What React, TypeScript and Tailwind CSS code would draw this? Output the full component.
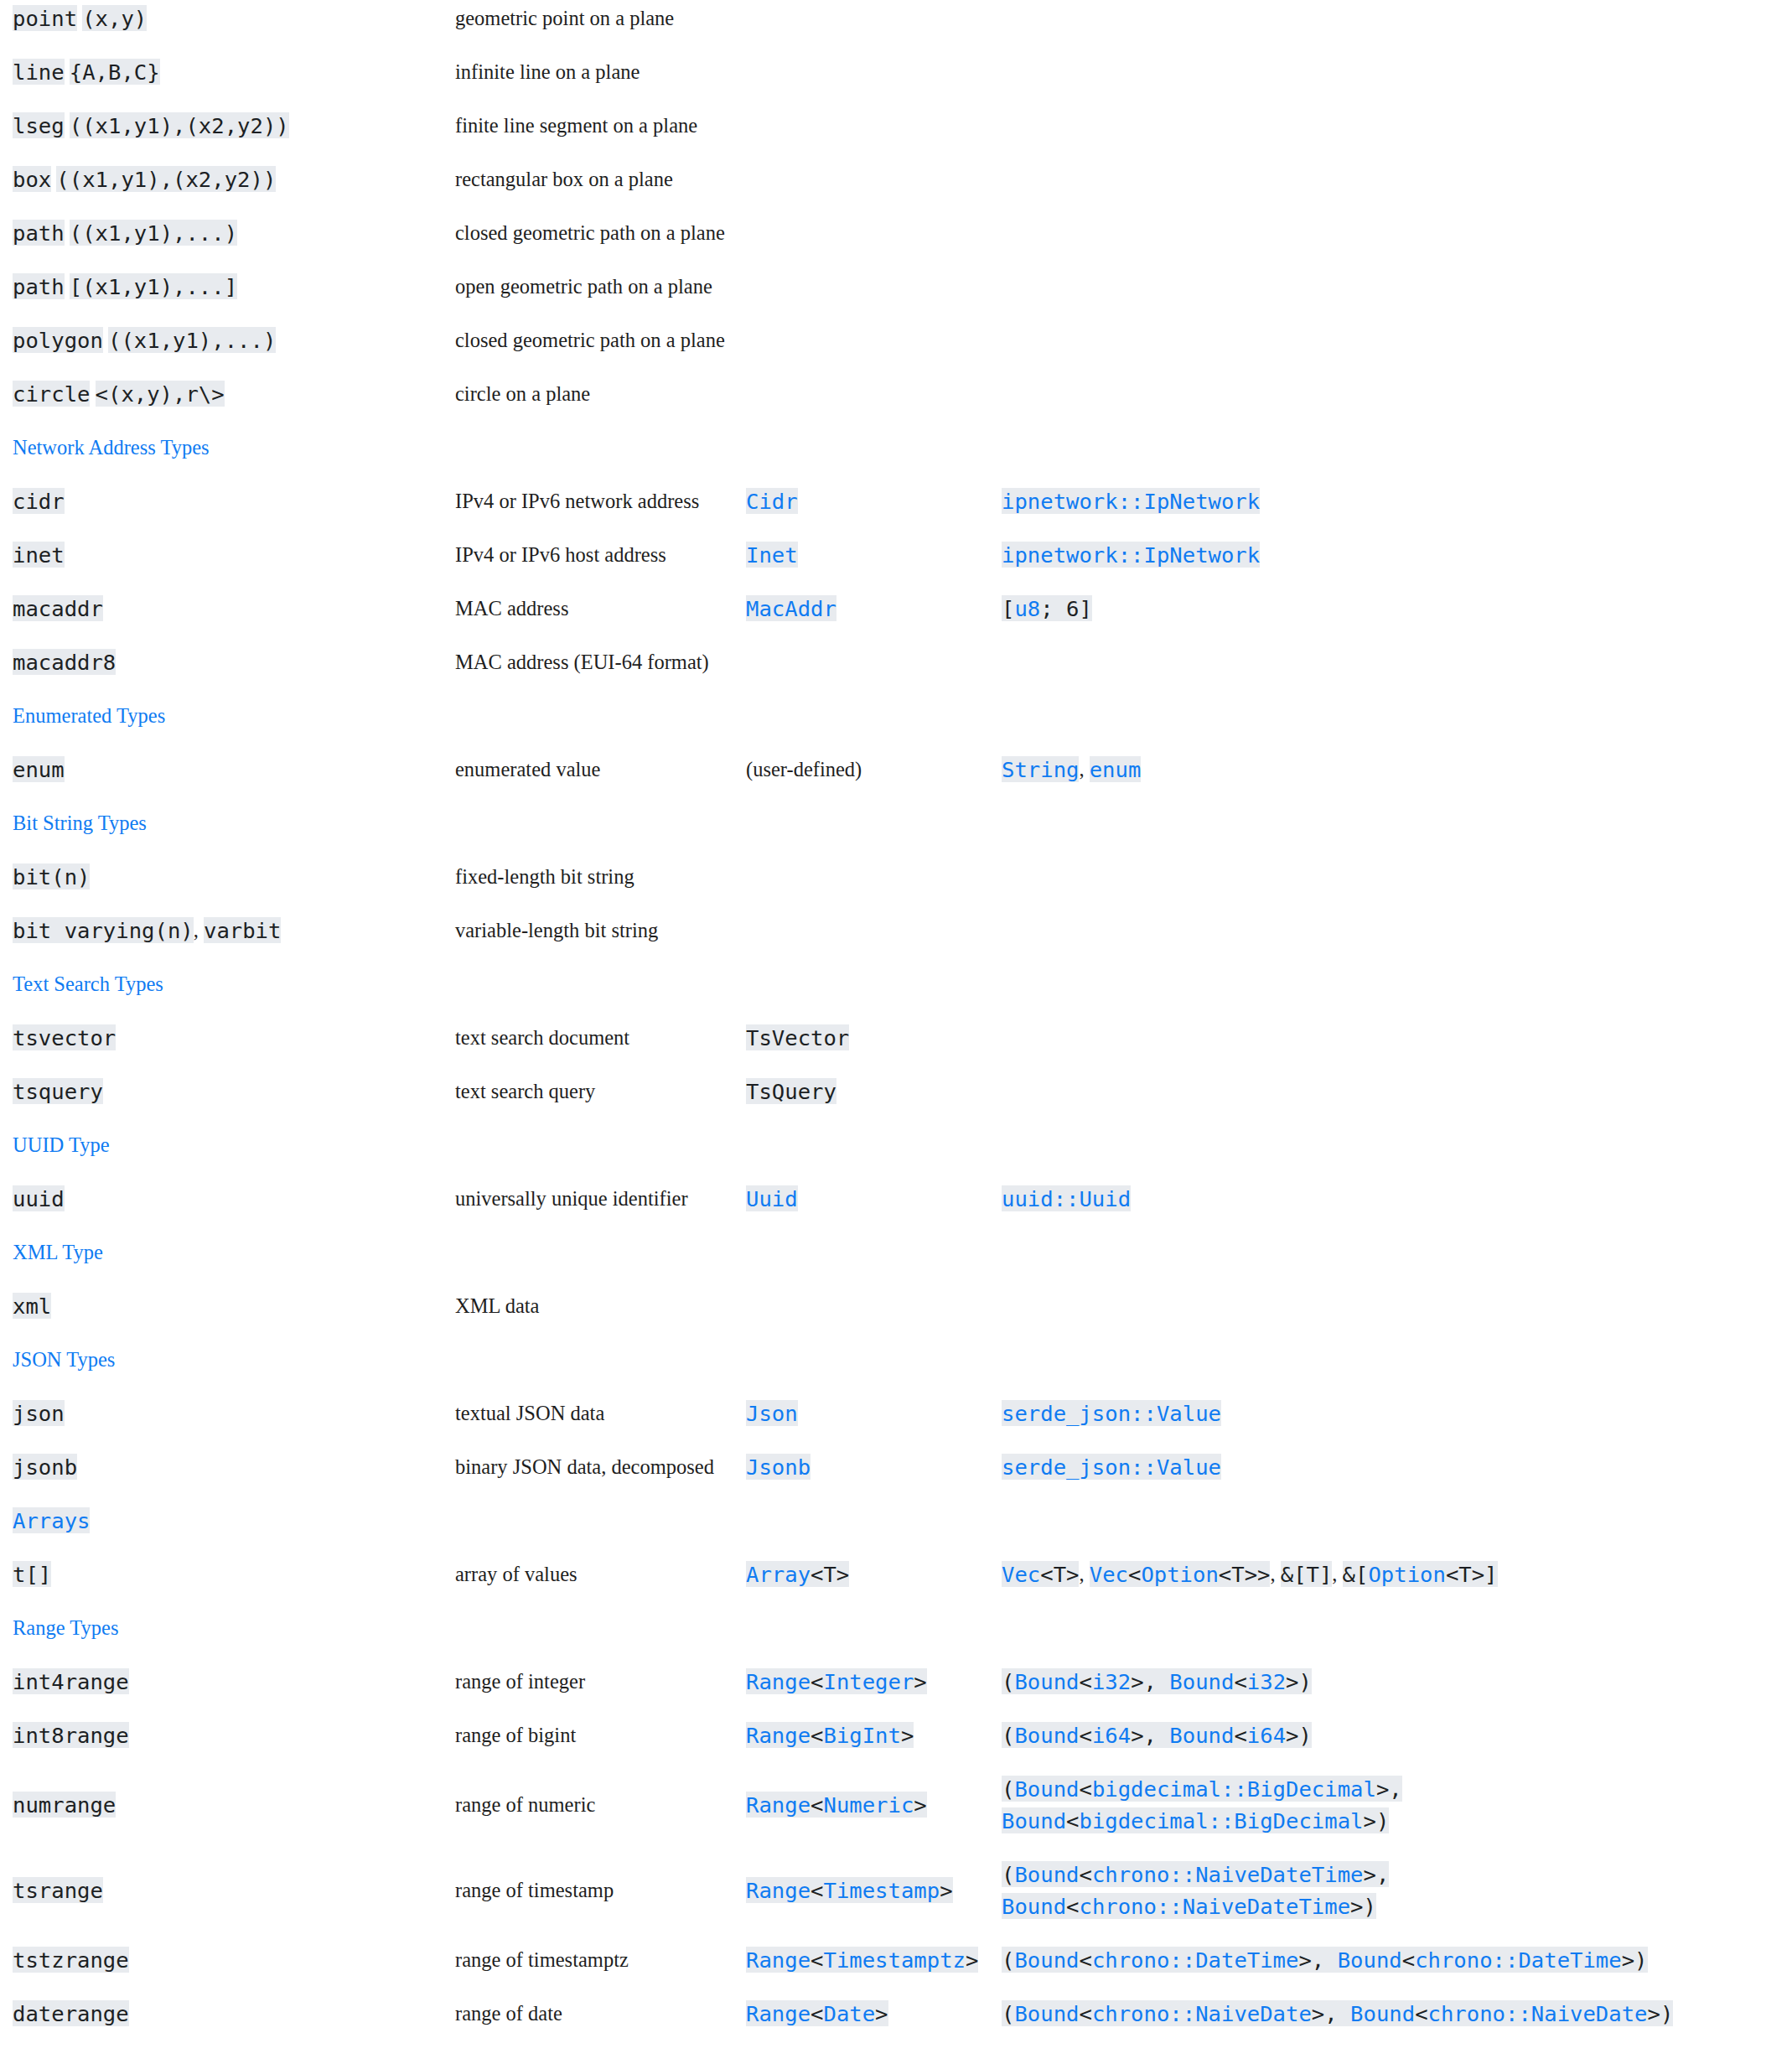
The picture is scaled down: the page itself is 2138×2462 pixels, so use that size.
import React from "react";

type Item = string | { code: string };
type Cell = Item[];
type Row = { head: Item } | { cells: Cell[] };

const c = (s: string) => ({ code: s });

// "~" toggles blue (linked) parts inside a code span
const Code = ({ src }: { src: string }) => {
  const parts = src.split("~");
  return (
    <code className="bg-[#e8ebef] py-[0.5px] font-['DejaVu_Sans_Mono',monospace] text-[25.6px] leading-none text-[#1c1f23]">
      {parts.map((p, i) =>
        i % 2 === 1 ? (
          <span key={i} className="text-[#0f7bf2]">
            {p}
          </span>
        ) : (
          <React.Fragment key={i}>{p}</React.Fragment>
        )
      )}
    </code>
  );
};

const renderItem = (it: Item, i: number) =>
  typeof it === "string" ? <React.Fragment key={i}>{it}</React.Fragment> : <Code key={i} src={it.code} />;

const rows: Row[] = [
  { cells: [[c("point"), " ", c("(x,y)")], ["geometric point on a plane"]] },
  { cells: [[c("line"), " ", c("{A,B,C}")], ["infinite line on a plane"]] },
  { cells: [[c("lseg"), " ", c("((x1,y1),(x2,y2))")], ["finite line segment on a plane"]] },
  { cells: [[c("box"), " ", c("((x1,y1),(x2,y2))")], ["rectangular box on a plane"]] },
  { cells: [[c("path"), " ", c("((x1,y1),...)")], ["closed geometric path on a plane"]] },
  { cells: [[c("path"), " ", c("[(x1,y1),...]")], ["open geometric path on a plane"]] },
  { cells: [[c("polygon"), " ", c("((x1,y1),...)")], ["closed geometric path on a plane"]] },
  { cells: [[c("circle"), " ", c("<(x,y),r\\>")], ["circle on a plane"]] },
  { head: "Network Address Types" },
  { cells: [[c("cidr")], ["IPv4 or IPv6 network address"], [c("~Cidr~")], [c("~ipnetwork::IpNetwork~")]] },
  { cells: [[c("inet")], ["IPv4 or IPv6 host address"], [c("~Inet~")], [c("~ipnetwork::IpNetwork~")]] },
  { cells: [[c("macaddr")], ["MAC address"], [c("~MacAddr~")], [c("[~u8~; 6]")]] },
  { cells: [[c("macaddr8")], ["MAC address (EUI-64 format)"]] },
  { head: "Enumerated Types" },
  { cells: [[c("enum")], ["enumerated value"], ["(user-defined)"], [c("~String~"), ", ", c("~enum~")]] },
  { head: "Bit String Types" },
  { cells: [[c("bit(n)")], ["fixed-length bit string"]] },
  { cells: [[c("bit varying(n)"), ", ", c("varbit")], ["variable-length bit string"]] },
  { head: "Text Search Types" },
  { cells: [[c("tsvector")], ["text search document"], [c("TsVector")]] },
  { cells: [[c("tsquery")], ["text search query"], [c("TsQuery")]] },
  { head: "UUID Type" },
  { cells: [[c("uuid")], ["universally unique identifier"], [c("~Uuid~")], [c("~uuid::Uuid~")]] },
  { head: "XML Type" },
  { cells: [[c("xml")], ["XML data"]] },
  { head: "JSON Types" },
  { cells: [[c("json")], ["textual JSON data"], [c("~Json~")], [c("~serde_json::Value~")]] },
  { cells: [[c("jsonb")], ["binary JSON data, decomposed"], [c("~Jsonb~")], [c("~serde_json::Value~")]] },
  { head: c("~Arrays~") },
  {
    cells: [
      [c("t[]")],
      ["array of values"],
      [c("~Array~<T>")],
      [c("~Vec~<T>"), ", ", c("~Vec~<~Option~<T>>"), ", ", c("&[T]"), ", ", c("&[~Option~<T>]")],
    ],
  },
  { head: "Range Types" },
  { cells: [[c("int4range")], ["range of integer"], [c("~Range~<~Integer~>")], [c("(~Bound~<~i32~>, ~Bound~<~i32~>)")]] },
  { cells: [[c("int8range")], ["range of bigint"], [c("~Range~<~BigInt~>")], [c("(~Bound~<~i64~>, ~Bound~<~i64~>)")]] },
  {
    cells: [
      [c("numrange")],
      ["range of numeric"],
      [c("~Range~<~Numeric~>")],
      [c("(~Bound~<~bigdecimal::BigDecimal~>, ~Bound~<~bigdecimal::BigDecimal~>)")],
    ],
  },
  {
    cells: [
      [c("tsrange")],
      ["range of timestamp"],
      [c("~Range~<~Timestamp~>")],
      [c("(~Bound~<~chrono::NaiveDateTime~>, ~Bound~<~chrono::NaiveDateTime~>)")],
    ],
  },
  {
    cells: [
      [c("tstzrange")],
      ["range of timestamptz"],
      [c("~Range~<~Timestamptz~>")],
      [c("(~Bound~<~chrono::DateTime~>, ~Bound~<~chrono::DateTime~>)")],
    ],
  },
  {
    cells: [
      [c("daterange")],
      ["range of date"],
      [c("~Range~<~Date~>")],
      [c("(~Bound~<~chrono::NaiveDate~>, ~Bound~<~chrono::NaiveDate~>)")],
    ],
  },
];

export default function App() {
  return (
    <div className="min-h-screen overflow-hidden bg-white font-['Liberation_Serif',serif] text-[24.5px] leading-[38px] text-[#1e1e1e]">
      <div className="-mt-[10px] pl-[15px]">
        {rows.map((row, i) =>
          "head" in row ? (
            <div key={i} className="py-[13px] text-[#0f7bf2]">
              {renderItem(row.head, 0)}
            </div>
          ) : (
            <div key={i} className="grid grid-cols-[528px_347px_305px_880px] items-center py-[13px]">
              {[0, 1, 2, 3].map((j) => (
                <div key={j}>{(row.cells[j] ?? []).map(renderItem)}</div>
              ))}
            </div>
          )
        )}
      </div>
    </div>
  );
}
